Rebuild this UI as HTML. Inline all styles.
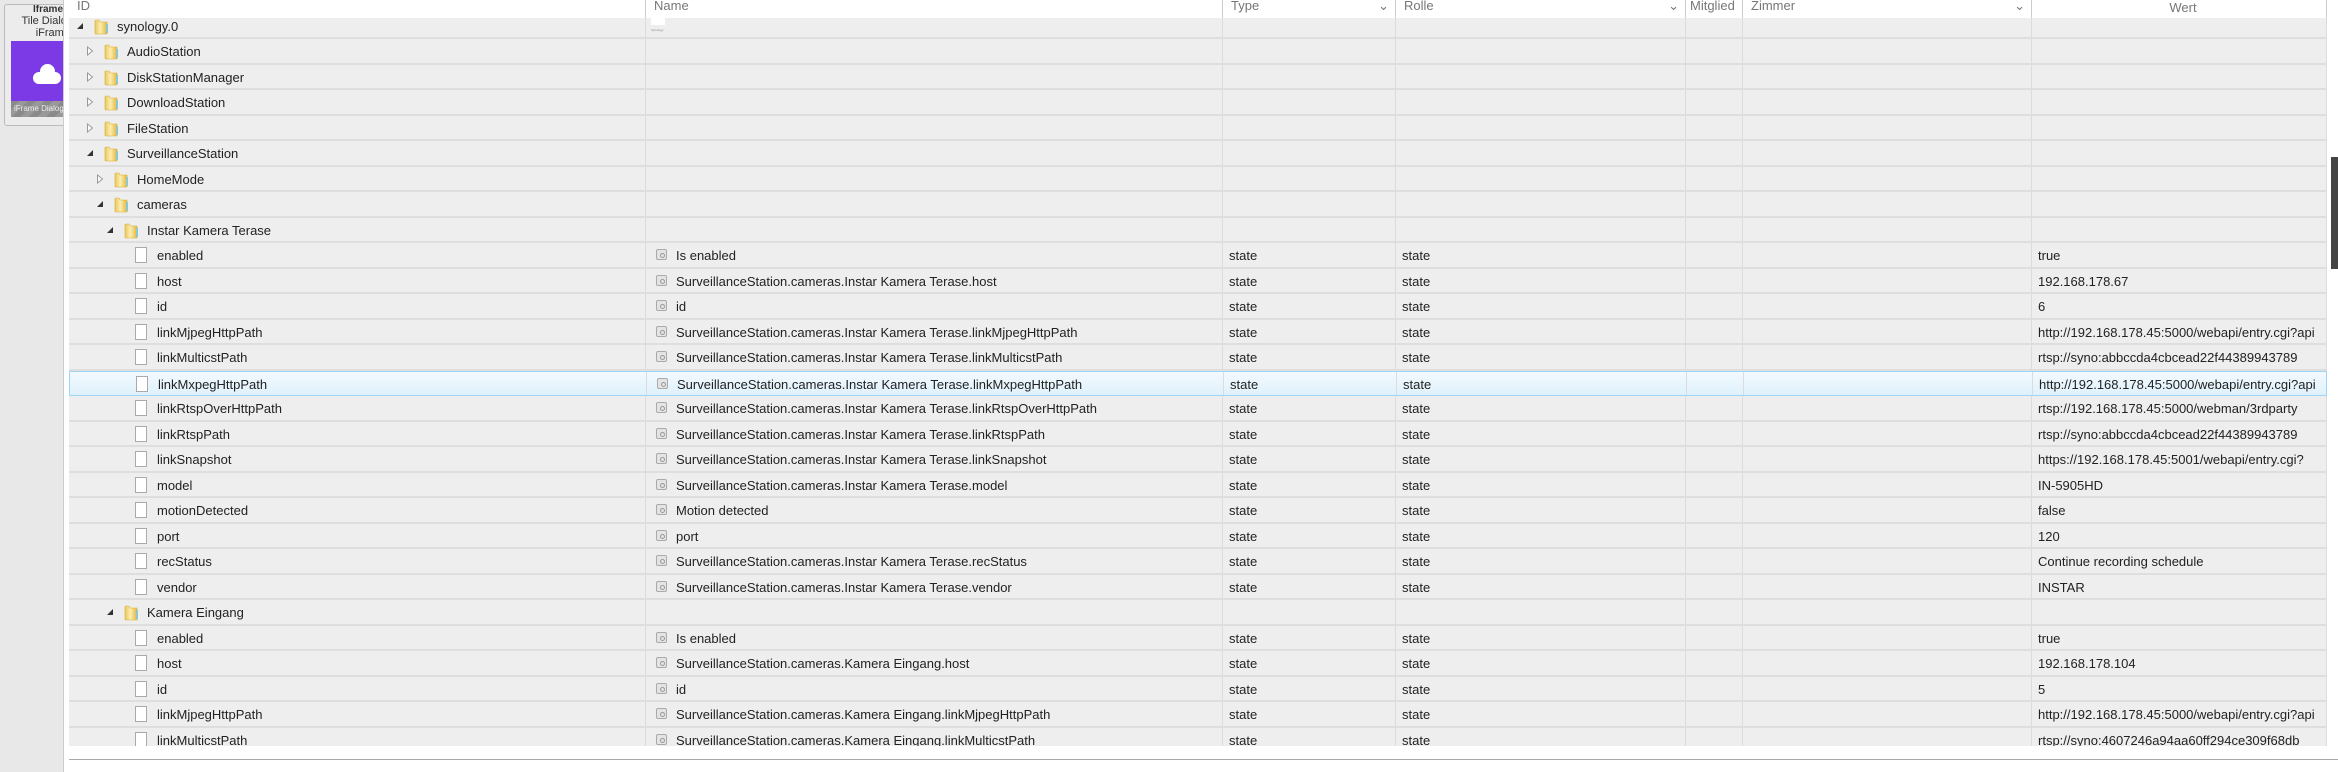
<!DOCTYPE html>
<html><head><meta charset="utf-8"><style>
*{margin:0;padding:0;box-sizing:border-box}
svg{display:block}
body{width:2338px;height:772px;overflow:hidden;background:#fff;font-family:"Liberation Sans",sans-serif;font-size:13px;color:#222;position:relative}
#left{position:absolute;left:0;top:0;width:63px;height:772px;background:#e8e8e8}
#card{position:absolute;left:4px;top:4px;width:70px;height:122px;border:1px solid #bbb;border-radius:3px;background:#ececec;font-size:10px;text-align:right;color:#333;overflow:hidden}
#main{position:absolute;left:63px;top:0;width:2275px;height:772px;background:#fff;border-left:1px solid #ccc}
#grid{position:absolute;left:69px;top:0;width:2258px;height:746px;overflow:hidden;background:#eee}
.row{position:absolute;left:0;width:2258px;height:25.5px;border-bottom:2px solid #dedede;white-space:nowrap}
.row.sel{background:linear-gradient(#f3fafe,#dff1fc);border:1px solid #9fd6f5}
.c{position:absolute;top:0;height:100%;border-right:1px solid #dcdcdc;line-height:26px;overflow:hidden}
.tri{position:absolute;top:7px}
.fold{position:absolute;top:5px}
.file{position:absolute;top:4px;width:12px;height:16px;background:#fff;border:1px solid #aaa}
.ic{position:absolute;left:10px;top:6px;width:11px;height:11px;border:1px solid #aaa;border-radius:2px;background:#e4e4e4}
.ic:after{content:"";position:absolute;left:3px;top:3px;width:3px;height:3px;border:1px solid #999;border-radius:50%}
#hdr{position:absolute;left:69px;top:0;width:2258px;height:18px;background:#fff;color:#777;font-size:13px;z-index:2}
#hdr div{position:absolute;top:0;height:18px;line-height:12px;border-right:1px solid #ccc;padding-left:8px;overflow:hidden;white-space:nowrap}
#sb{position:absolute;left:2331px;top:157px;width:7px;height:112px;background:#444}
#bl{position:absolute;left:69px;top:759px;width:2269px;height:1px;background:#aaa}
</style></head><body>
<div id="left"><div id="card"><div style="font-weight:bold;padding-right:10px;line-height:10px">Iframe</div><div style="font-size:11px;line-height:12px;padding-right:0">Tile Dialog<br>iFrame&nbsp;</div>
<div style="position:absolute;left:6px;top:36px;width:64px;height:60px;background:#7b3ae6"><div style="position:absolute;left:22px;top:31px;width:28px;height:12px;background:#fff;border-radius:6px"></div><div style="position:absolute;left:29px;top:23px;width:15px;height:15px;background:#fff;border-radius:50%"></div></div>
<div style="position:absolute;left:6px;top:96px;width:64px;height:16px;background:repeating-linear-gradient(135deg,#8a8a8a 0 6px,#999 6px 12px);color:#eee;font-size:8px;line-height:16px;text-align:left;padding-left:3px">iFrame Dialog</div></div></div>
<div id="main"></div>
<div id="hdr">
<div style="left:0;width:577px">ID</div>
<div style="left:577px;width:577px">Name</div>
<div style="left:1154px;width:173px">Type<span style="position:absolute;right:6px">&#8964;</span></div>
<div style="left:1327px;width:290px">Rolle<span style="position:absolute;right:6px">&#8964;</span></div>
<div style="left:1617px;width:57px;padding-left:4px">Mitglied</div>
<div style="left:1674px;width:289px">Zimmer<span style="position:absolute;right:6px">&#8964;</span></div>
<div style="left:1963px;width:295px;text-align:center;line-height:16px">Wert</div>
</div>
<div id="grid"></div>
<div id="sb"></div>
<div id="bl"></div>
<script>
var rows=[
["f",0,"o","synology.0","","","",""],
["f",1,"c","AudioStation"],["f",1,"c","DiskStationManager"],["f",1,"c","DownloadStation"],["f",1,"c","FileStation"],
["f",1,"o","SurveillanceStation"],["f",2,"c","HomeMode"],["f",2,"o","cameras"],["f",3,"o","Instar Kamera Terase"],
["s","enabled","Is enabled","true"],
["s","host","SurveillanceStation.cameras.Instar Kamera Terase.host","192.168.178.67"],
["s","id","id","6"],
["s","linkMjpegHttpPath","SurveillanceStation.cameras.Instar Kamera Terase.linkMjpegHttpPath","http://192.168.178.45:5000/webapi/entry.cgi?api"],
["s","linkMulticstPath","SurveillanceStation.cameras.Instar Kamera Terase.linkMulticstPath","rtsp://syno:abbccda4cbcead22f44389943789"],
["s","linkMxpegHttpPath","SurveillanceStation.cameras.Instar Kamera Terase.linkMxpegHttpPath","http://192.168.178.45:5000/webapi/entry.cgi?api",1],
["s","linkRtspOverHttpPath","SurveillanceStation.cameras.Instar Kamera Terase.linkRtspOverHttpPath","rtsp://192.168.178.45:5000/webman/3rdparty"],
["s","linkRtspPath","SurveillanceStation.cameras.Instar Kamera Terase.linkRtspPath","rtsp://syno:abbccda4cbcead22f44389943789"],
["s","linkSnapshot","SurveillanceStation.cameras.Instar Kamera Terase.linkSnapshot","https://192.168.178.45:5001/webapi/entry.cgi?"],
["s","model","SurveillanceStation.cameras.Instar Kamera Terase.model","IN-5905HD"],
["s","motionDetected","Motion detected","false"],
["s","port","port","120"],
["s","recStatus","SurveillanceStation.cameras.Instar Kamera Terase.recStatus","Continue recording schedule"],
["s","vendor","SurveillanceStation.cameras.Instar Kamera Terase.vendor","INSTAR"],
["f",3,"o","Kamera Eingang"],
["s","enabled","Is enabled","true"],
["s","host","SurveillanceStation.cameras.Kamera Eingang.host","192.168.178.104"],
["s","id","id","5"],
["s","linkMjpegHttpPath","SurveillanceStation.cameras.Kamera Eingang.linkMjpegHttpPath","http://192.168.178.45:5000/webapi/entry.cgi?api"],
["s","linkMulticstPath","SurveillanceStation.cameras.Kamera Eingang.linkMulticstPath","rtsp://syno:4607246a94aa60ff294ce309f68db"]
];
var cols=[[0,577],[577,577],[1154,173],[1327,290],[1617,57],[1674,289],[1963,295]];
var triO='<svg width="8" height="10" viewBox="0 0 8 10"><path d="M7 2 L7 8 L1 8 Z" fill="#333"/></svg>';
var triC='<svg width="8" height="10" viewBox="0 0 8 10"><path d="M1.5 1 L6.5 5 L1.5 9 Z" fill="#fff" stroke="#999" stroke-width="1"/></svg>';
var fold='<svg width="16" height="16" viewBox="0 0 16 16"><defs><linearGradient id="fg" x1="0" x2="1"><stop offset="0" stop-color="#e9c95a"/><stop offset=".45" stop-color="#fcedb0"/><stop offset="1" stop-color="#e2b83e"/></linearGradient></defs><path d="M1 2 Q1 1 2 1 L5 1 L6 3 L13 3 L13 15 L2 15 Q1 15 1 14 Z" fill="url(#fg)" stroke="#d7ac38" stroke-width=".6"/><rect x="12" y="5" width="2" height="9" fill="#8cc7cf"/></svg>';
var g=document.getElementById('grid'),h='';
rows.forEach(function(r,i){
 var top=13.8+i*25.5,sel=r[4]===1&&r[0]=='s';
 h+='<div class="row'+(sel?' sel':'')+'" style="top:'+top+'px">';
 var cells=['','','','','','',''];
 if(r[0]=='f'){var L=r[1],x=7+10*L;
  cells[0]='<div class="tri" style="left:'+x+'px">'+(r[2]=='o'?triO:triC)+'</div><div class="fold" style="left:'+(25+10*L)+'px">'+fold+'</div><span style="position:absolute;left:'+(48+10*L)+'px">'+r[3]+'</span>';
  if(i==0)cells[1]='<div style="position:absolute;left:5px;top:3px;width:14px;height:8px;background:#fff;font-size:3px;color:#888">Synology</div>';
 }else{
  cells[0]='<div class="file" style="left:66px"></div><span style="position:absolute;left:88px">'+r[1]+'</span>';
  cells[1]='<div class="ic"></div><span style="position:absolute;left:30px">'+r[2]+'</span>';
  cells[2]='<span style="padding-left:6px">state</span>';cells[3]=cells[2];
  cells[6]='<span style="padding-left:6px">'+r[3]+'</span>';
 }
 cols.forEach(function(c,j){h+='<div class="c" style="left:'+c[0]+'px;width:'+c[1]+'px">'+cells[j]+'</div>';});
 h+='</div>';
});
g.innerHTML=h;
</script>
</body></html>
